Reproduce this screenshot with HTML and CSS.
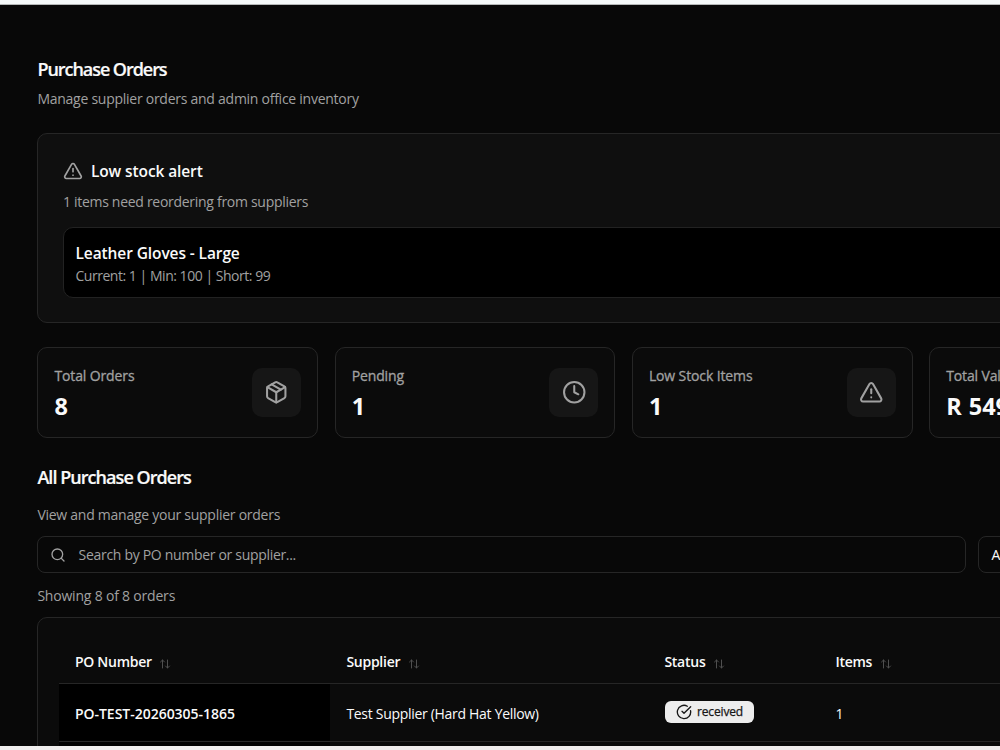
FILE: index.html
```html
<!DOCTYPE html>
<html lang="en">
<head>
    <meta charset="UTF-8">
    <meta name="viewport" content="width=device-width, initial-scale=1.0">
    <title>Purchase Orders</title>
    <link rel="stylesheet" href="styles.css">
</head>
<body>
    <svg class="sprite" width="0" height="0">
        <symbol id="triangle" viewBox="0 0 24 24">
            <path d="m21.73 18-8-14a2 2 0 0 0-3.48 0l-8 14A2 2 0 0 0 4 21h16a2 2 0 0 0 1.73-3"/>
            <path d="M12 9v4"/>
            <path d="M12 17h.01"/>
        </symbol>
        <symbol id="sort" viewBox="0 0 24 24">
            <path d="m21 16-4 4-4-4"/>
            <path d="M17 20V4"/>
            <path d="m3 8 4-4 4 4"/>
            <path d="M7 4v16"/>
        </symbol>
    </svg>

    <main class="page">
        <div class="content">
            <header class="page-header">
                <h1>Purchase Orders</h1>
                <p class="page-desc">Manage supplier orders and admin office inventory</p>
            </header>

            <section class="alert">
                <div class="alert-title">
                    <svg class="icon"><use href="#triangle"/></svg>
                    <h3>Low stock alert</h3>
                </div>
                <p class="alert-desc">1 items need reordering from suppliers</p>
                <div class="alert-item">
                    <p class="item-name">Leather Gloves - Large</p>
                    <p class="item-info">Current: 1 | Min: 100 | Short: 99</p>
                </div>
            </section>

            <section class="stats">
                <div class="stat">
                    <div>
                        <p class="stat-label">Total Orders</p>
                        <p class="stat-value">8</p>
                    </div>
                    <div class="stat-icon">
                        <svg class="icon" viewBox="0 0 24 24">
                            <path d="M11 21.73a2 2 0 0 0 2 0l7-4A2 2 0 0 0 21 16V8a2 2 0 0 0-1-1.73l-7-4a2 2 0 0 0-2 0l-7 4A2 2 0 0 0 3 8v8a2 2 0 0 0 1 1.73z"/>
                            <path d="M12 22V12"/>
                            <path d="m3.3 7 8.7 5 8.7-5"/>
                            <path d="m7.5 4.27 9 5.15"/>
                        </svg>
                    </div>
                </div>
                <div class="stat">
                    <div>
                        <p class="stat-label">Pending</p>
                        <p class="stat-value">1</p>
                    </div>
                    <div class="stat-icon">
                        <svg class="icon" viewBox="0 0 24 24">
                            <circle cx="12" cy="12" r="10"/>
                            <path d="M12 6v6l4 2"/>
                        </svg>
                    </div>
                </div>
                <div class="stat">
                    <div>
                        <p class="stat-label">Low Stock Items</p>
                        <p class="stat-value">1</p>
                    </div>
                    <div class="stat-icon">
                        <svg class="icon"><use href="#triangle"/></svg>
                    </div>
                </div>
                <div class="stat">
                    <div>
                        <p class="stat-label">Total Value</p>
                        <p class="stat-value">R 549</p>
                    </div>
                </div>
            </section>

            <h2>All Purchase Orders</h2>
            <p class="list-desc">View and manage your supplier orders</p>

            <div class="filters">
                <div class="search">
                    <svg class="icon" viewBox="0 0 24 24">
                        <circle cx="11" cy="11" r="8"/>
                        <path d="m21 21-4.3-4.3"/>
                    </svg>
                    <span>Search by PO number or supplier...</span>
                </div>
                <div class="select">All</div>
            </div>
            <p class="count">Showing 8 of 8 orders</p>

            <div class="table-card">
                <table>
                    <thead>
                        <tr>
                            <th class="col-po"><span>PO Number</span><svg class="icon"><use href="#sort"/></svg></th>
                            <th class="col-supplier"><span>Supplier</span><svg class="icon"><use href="#sort"/></svg></th>
                            <th class="col-status"><span>Status</span><svg class="icon"><use href="#sort"/></svg></th>
                            <th class="col-items"><span>Items</span><svg class="icon"><use href="#sort"/></svg></th>
                        </tr>
                    </thead>
                    <tbody>
                        <tr>
                            <td class="po">PO-TEST-20260305-1865</td>
                            <td class="supplier">Test Supplier (Hard Hat Yellow)</td>
                            <td class="status">
                                <span class="badge">
                                    <svg class="icon" viewBox="0 0 24 24">
                                        <path d="M21.801 10A10 10 0 1 1 17 3.335"/>
                                        <path d="m9 11 3 3L22 4"/>
                                    </svg>
                                    <span>received</span>
                                </span>
                            </td>
                            <td>1</td>
                        </tr>
                        <tr>
                            <td class="po"></td>
                            <td></td>
                            <td></td>
                            <td></td>
                        </tr>
                    </tbody>
                </table>
            </div>
        </div>
    </main>
</body>
</html>
```
FILE: styles.css
```css
* {
    box-sizing: border-box;
}

body {
    margin: 0;
    height: 750px;
    overflow: hidden;
    background-color: #f0eeee;
    font-family: "Open Sans", "Noto Sans", sans-serif;
    font-size: 14px;
    color: #fafafa;
}

h1, h2, h3, p {
    margin: 0;
    white-space: nowrap;
}

.sprite {
    display: block;
}

.icon {
    flex-shrink: 0;
    fill: none;
    stroke: currentColor;
    stroke-width: 2;
    stroke-linecap: round;
    stroke-linejoin: round;
}

.page {
    height: 746px;
    overflow: hidden;
    border-top: 4px solid #f5f9fa;
    box-shadow: inset 0 1px 0 #b5b8b8;
    background-color: #080808;
    padding: 51px 0 0 37.4px;
}

.content {
    width: 1172.6px;
}

h1, h2 {
    font-size: 18px;
    font-weight: 600;
    line-height: 28px;
    letter-spacing: -1.05px;
    -webkit-text-stroke: 0.2px currentColor;
}

h2 {
    margin-top: 25px;
    letter-spacing: -0.95px;
}

.page-desc, .alert-desc, .item-info, .list-desc, .count {
    color: #a1a1a1;
    line-height: 22px;
    letter-spacing: -0.26px;
}

.page-desc {
    margin-top: 5px;
}

.alert {
    height: 190px;
    margin-top: 23px;
    padding: 26px 24.5px;
    border: 1px solid #262626;
    border-radius: 10px;
    background-color: #0f0f0f;
}

.alert-title {
    display: flex;
    align-items: center;
    gap: 8px;
    height: 22px;
}

.alert-title .icon {
    width: 20px;
    height: 20px;
    color: #a1a1a1;
}

h3, .item-name {
    font-size: 15.5px;
    font-weight: 600;
    line-height: 22px;
    letter-spacing: -0.1px;
}

.alert-desc {
    margin-top: 9px;
    letter-spacing: -0.29px;
}

.alert-item {
    height: 71px;
    margin-top: 14px;
    padding: 14px 11.6px;
    border: 1px solid #222;
    border-radius: 10px;
    background-color: #000;
}

.item-info {
    margin-top: 1px;
    letter-spacing: -0.47px;
}

.stats {
    display: grid;
    grid-template-columns: repeat(4, 1fr);
    gap: 16.4px;
    margin-top: 24px;
}

.stat {
    display: flex;
    justify-content: space-between;
    align-items: center;
    height: 91px;
    padding: 0 16px;
    border: 1px solid #262626;
    border-radius: 10px;
    background-color: #0b0b0b;
}

.stat-label {
    margin-top: 1px;
    color: #a1a1a1;
    line-height: 22px;
    letter-spacing: -0.12px;
    -webkit-text-stroke: 0.3px currentColor;
}

.stat-value {
    margin-top: 3px;
    font-size: 23.5px;
    font-weight: 700;
    line-height: 32px;
    word-spacing: 1px;
}

.stat-icon {
    display: flex;
    justify-content: center;
    align-items: center;
    width: 49px;
    height: 49px;
    border-radius: 10px;
    background-color: #161616;
    color: #a1a1a1;
}

.stat-icon .icon {
    width: 24.5px;
    height: 24.5px;
}

.list-desc {
    margin-top: 13px;
}

.filters {
    display: flex;
    gap: 12px;
    margin-top: 10px;
}

.search, .select {
    display: flex;
    align-items: center;
    height: 37px;
    border: 1px solid #262626;
    border-radius: 8px;
}

.search {
    width: 929px;
    padding-left: 12px;
    color: #a1a1a1;
    letter-spacing: -0.31px;
}

.search .icon {
    width: 16px;
    height: 16px;
    margin-right: 12.2px;
}

.select {
    flex: 1;
    padding-left: 12px;
}

.count {
    margin-top: 12px;
    letter-spacing: -0.2px;
}

.table-card {
    height: 200px;
    margin-top: 10px;
    padding: 24px 20.5px;
    border: 1px solid #262626;
    border-radius: 10px;
    background-color: #0b0b0b;
}

table {
    width: 100%;
    border-collapse: collapse;
    table-layout: fixed;
}

th, td {
    padding: 0 16px;
    text-align: left;
    border-bottom: 1px solid #262626;
    white-space: nowrap;
}

th {
    height: 41px;
    padding-bottom: 2px;
    font-weight: 600;
    letter-spacing: -0.26px;
}

th .icon {
    width: 12px;
    height: 12px;
    margin-left: 7.5px;
    color: #4f4f4f;
    vertical-align: -3px;
}

td {
    height: 58px;
    padding-top: 2px;
}

.col-po {
    width: 271.5px;
}

.col-supplier {
    width: 318px;
}

.col-status {
    width: 171px;
}

.po {
    background-color: #000;
    font-weight: 600;
    letter-spacing: -0.02px;
}

.supplier {
    letter-spacing: -0.3px;
}

.status {
    padding: 0 16px 1px 16.6px;
}

.badge {
    display: inline-flex;
    align-items: center;
    gap: 5px;
    height: 22px;
    padding: 0 11px;
    border-radius: 6px;
    background-color: #ededed;
    color: #171717;
    font-size: 12px;
    letter-spacing: -0.15px;
    -webkit-text-stroke: 0.25px currentColor;
    vertical-align: middle;
}

.badge .icon {
    width: 16px;
    height: 16px;
}
```
